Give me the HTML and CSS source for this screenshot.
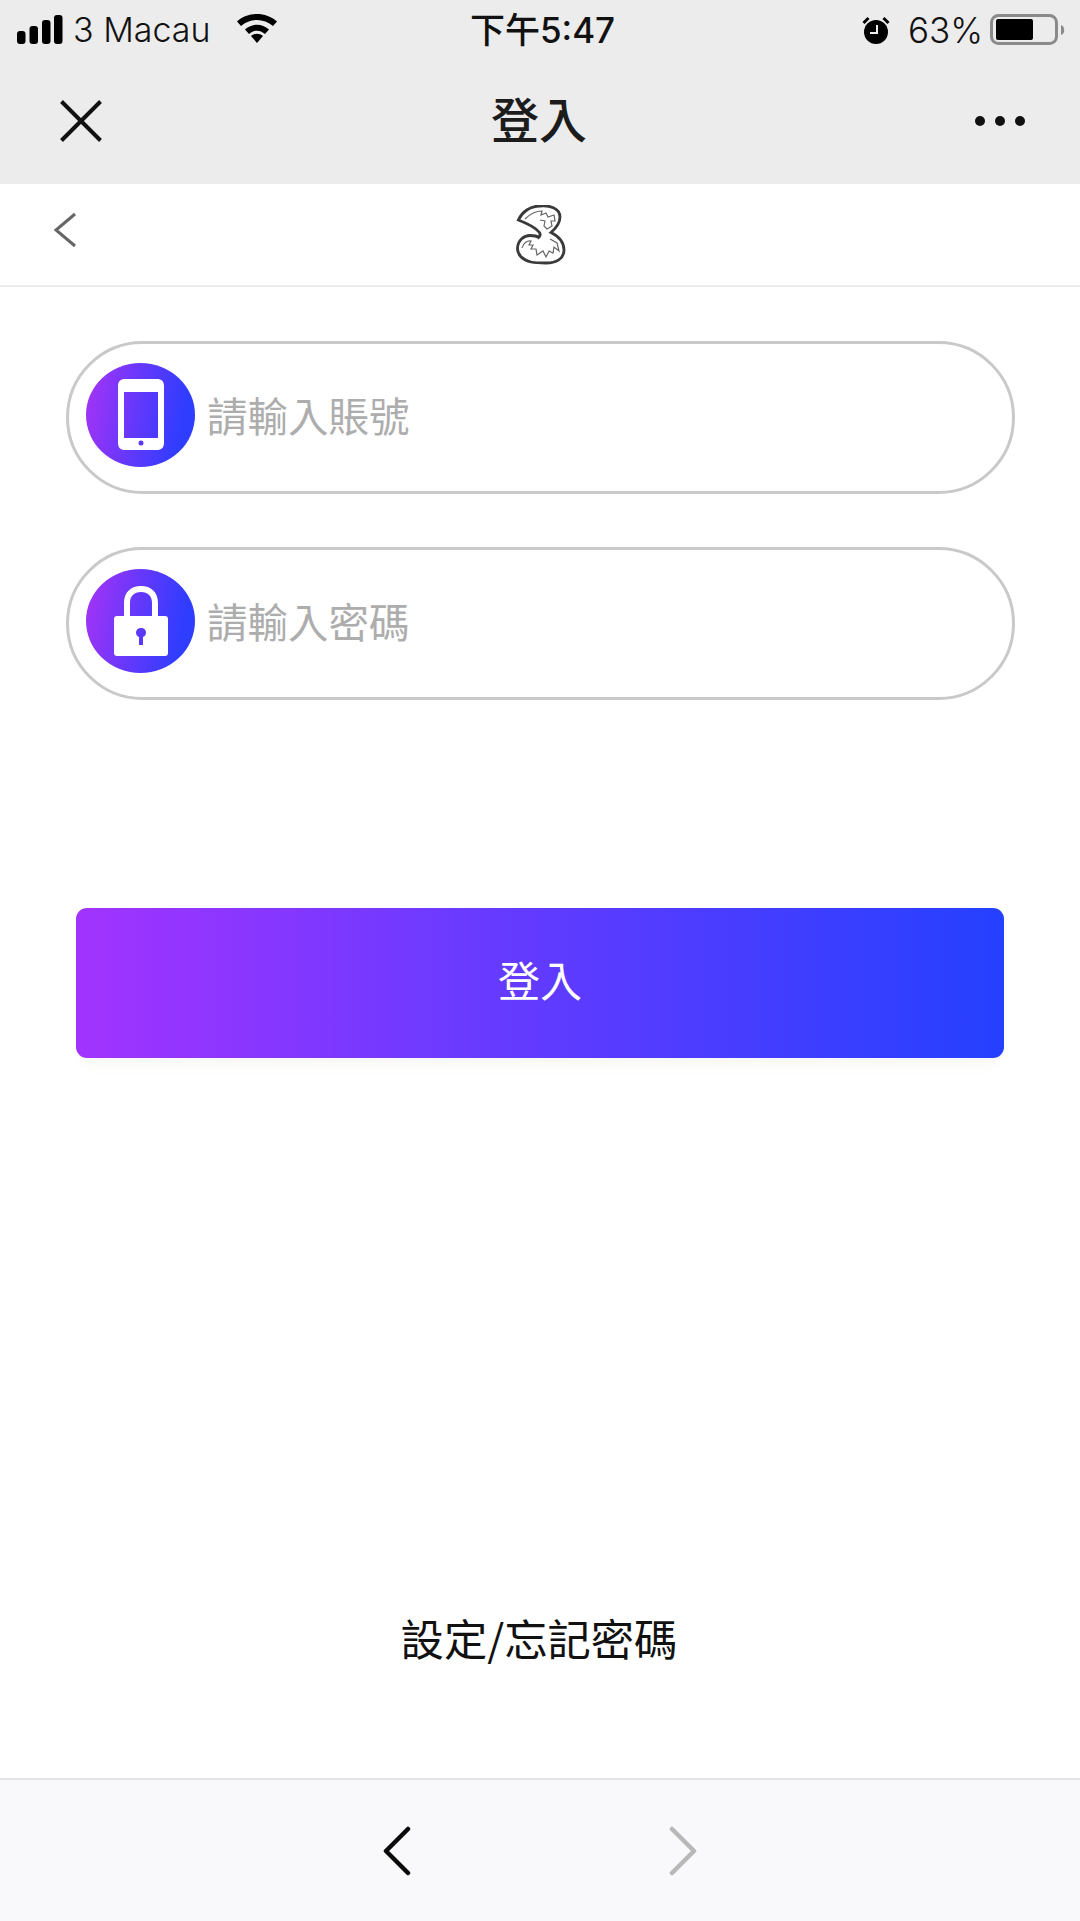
FILE: index.html
```html
<!DOCTYPE html>
<html lang="zh-Hant">
<head>
<meta charset="utf-8">
<title>登入</title>
<link rel="stylesheet" href="styles.css">
</head>
<body>
<div class="app">
  <header class="top">
    <div class="status">
      <div class="status-left">
        <svg class="signal" width="46" height="30" viewBox="0 0 46 30"><rect x="0" y="16" width="8.500" height="13" rx="3"/><rect x="12.500" y="11" width="8.500" height="18" rx="3"/><rect x="25" y="5" width="8.500" height="24" rx="3"/><rect x="37" y="0" width="8.500" height="29" rx="3"/></svg>
        <span class="carrier">3 Macau</span>
        <svg class="wifi" width="40" height="30" viewBox="0 0 40 30"><path d="M0 7.500C11-2.500 29-2.500 40 7.500L36 12C27 4 13 4 4 12Z"/><path d="M8 15.500C15 9 25 9 32 15.500L28 20C23 15.500 17 15.500 12 20Z"/><path d="M14 22C17.500 19 22.500 19 26 22L20 29Z"/></svg>
      </div>
      <div class="status-time">下午5:47</div>
      <div class="status-right">
        <svg class="alarm" width="28" height="28" viewBox="0 0 28 28"><circle cx="14" cy="16" r="12"/><path d="M1.500 7 6.500 2M26.500 7 21.500 2" class="alarm-bell"/><path d="M15 9v8H8" class="alarm-hand"/></svg>
        <span class="percent">63%</span>
        <svg class="battery" width="76" height="32" viewBox="0 0 76 32"><rect x="1.500" y="1.500" width="65" height="28" rx="7" class="battery-case"/><rect x="6" y="5" width="37" height="21" rx="2"/><path d="M71 11c4 1 4.500 9 0 10Z" class="battery-nub"/></svg>
      </div>
    </div>
    <div class="nav">
      <svg class="close" width="42" height="42" viewBox="0 0 42 42"><path d="M1.500 1.500 40.500 40.500M40.500 1.500 1.500 40.500"/></svg>
      <h1 class="nav-title">登入</h1>
      <div class="dots"><i></i><i></i><i></i></div>
    </div>
  </header>

  <div class="brand">
    <svg class="back" width="24" height="36" viewBox="0 0 24 36"><path d="M22 2 3 18 22 34"/></svg>
    <svg class="logo" width="50" height="60" viewBox="0 0 50 60">
      <path class="logo-outer" d="M2.300 15C6 7 14 1 24 1C33 0 44 3 44 12C44 19 39 24 35 27.500C42 31 48 37 48 45C48 54 40 58 30 58C24 58 20 58 15 57C7 55 1 50 1.500 43C2 35 8 30.500 14 30.500C18 30.500 21 31 22.500 32.500C24 31 25 29 23 27C19 22 10 18 2.300 15Z"/>
      <path class="logo-inner" d="M9 14C14 9 20 6 26 6L25 10 30 8 32 12 38 10 39 16 35 16 36 21 31 24 28 21 29 16 24 15M6 43C7 38 12 35 15 36L13 40 17 40 15 44 20 44 21 50 27 46 30 52 33 46 37 48 38 42 43 46 41 38 34 34"/>
    </svg>
  </div>

  <main class="content">
    <label class="field">
      <span class="badge">
        <svg width="48" height="72" viewBox="0 0 48 72"><path class="glyph" fill-rule="evenodd" d="M8 0H40C44.500 0 47 2.500 47 7V64C47 68.500 44.500 71 40 71H8C3.500 71 1 68.500 1 64V7C1 2.500 3.500 0 8 0ZM7 13V59H41V13ZM24 61.500A2.500 2.500 0 1 0 24 66.500A2.500 2.500 0 1 0 24 61.500Z"/></svg>
      </span>
      <span class="placeholder">請輸入賬號</span>
    </label>
    <label class="field field-second">
      <span class="badge">
        <svg width="56" height="72" viewBox="0 0 56 72"><path class="glyph" fill-rule="evenodd" d="M11 31V18C11 7 18 1 28 1C38 1 45 7 45 18V31H52C54 31 55 32 55 34V68C55 70 54 71 52 71H4C2 71 1 70 1 68V34C1 32 2 31 4 31ZM17 31H39V18C39 11 35 7 28 7C21 7 17 11 17 18ZM28 43C25 43 23 45 23 47.500C23 49.500 24 51 26 52V60H30V52C32 51 33 49.500 33 47.500C33 45 31 43 28 43Z"/></svg>
      </span>
      <span class="placeholder">請輸入密碼</span>
    </label>
    <button class="submit" type="button"><span class="submit-label">登入</span></button>
    <a class="forgot">設定/忘記密碼</a>
  </main>

  <footer class="toolbar">
    <svg class="arrow arrow-on" width="28" height="50" viewBox="0 0 28 50"><path d="M25 3 3 25 25 47"/></svg>
    <svg class="arrow arrow-off" width="28" height="50" viewBox="0 0 28 50"><path d="M3 3 25 25 3 47"/></svg>
  </footer>
</div>
</body>
</html>
```

FILE: styles.css
```css
* { box-sizing: border-box; }
html, body { margin: 0; padding: 0; background: #fff; }
body { font-family: "Noto Sans CJK TC", "Noto Sans", sans-serif; color: #111; }
.app { width: 1080px; height: 1921px; display: flex; flex-direction: column; overflow: hidden; }

.top { height: 184px; background: #ececec; flex: none; }
.status { height: 60px; display: grid; grid-template-columns: 1fr auto 1fr; align-items: center; padding: 0 14px 0 17px; }
.status-left { display: flex; align-items: center; }
.signal { fill: #000; margin-top: -1px; }
.carrier { font: 300 34px/1 Inter, sans-serif; margin-left: 10px; color: #111; }
.wifi { fill: #000; margin-left: 26px; margin-top: -2px; }
.status-time { font: 500 35px/1 Inter, "Noto Sans CJK TC", sans-serif; color: #111; margin-left: 2px; }
.status-right { display: flex; align-items: center; justify-content: flex-end; }
.alarm { fill: #000; }
.alarm-bell { fill: none; stroke: #000; stroke-width: 3; }
.alarm-hand { fill: none; stroke: #ececec; stroke-width: 2; }
.percent { font: 300 35px/1 Inter, sans-serif; margin: 0 7px 0 18px; color: #111; }
.battery { fill: #000; }
.battery-case { fill: none; stroke: #8a8a8a; stroke-width: 3; }
.battery-nub { fill: #8a8a8a; }

.nav { height: 124px; display: flex; align-items: center; justify-content: space-between; padding: 0 55px 3px 60px; position: relative; }
.close { fill: none; stroke: #111; stroke-width: 4; }
.nav-title { margin: 0 0 8px; font-size: 48px; font-weight: 500; line-height: 1; color: #1c1c1c; position: absolute; left: 0; right: 2px; text-align: center; pointer-events: none; }
.dots { display: flex; gap: 10px; }
.dots i { width: 10px; height: 10px; border-radius: 50%; background: #111; }

.brand { height: 103px; border-bottom: 2px solid #ececec; flex: none; display: flex; align-items: flex-start; padding: 28px 0 0 54px; position: relative; }
.back { fill: none; stroke: #666; stroke-width: 3; margin-left: -1px; }
.logo { position: absolute; left: 516px; top: 21px; }
.logo-outer { fill: #fff; stroke: #3a3a3a; stroke-width: 2.800; }
.logo-inner { fill: none; stroke: #666; stroke-width: 1.200; }

.content { flex: 1; display: flex; flex-direction: column; padding: 54px 65px 0 66px; }
.field { height: 153px; border: 3px solid #c9c9c9; border-radius: 77px; display: flex; align-items: center; padding: 0 0 5px 17px; }
.field-second { margin-top: 53px; }
.badge { width: 109px; height: 104px; border-radius: 50%; flex: none; background: linear-gradient(100deg, #a833f6 0%, #6538fb 45%, #2e3dff 85%); display: flex; align-items: center; justify-content: center; }
.glyph { fill: #fff; }
.placeholder { margin-left: 12px; font-size: 40.500px; line-height: 1; font-weight: 400; color: #adadad; }
.submit { margin: 208px 11px 0 10px; height: 150px; border: 0; border-radius: 11px; background: linear-gradient(90deg, #a233ff 0%, #6a3aff 42%, #2540ff 100%); box-shadow: 0 12px 10px -6px rgba(240, 240, 235, .5); padding: 0 0 9px; color: #fff; font: 400 42px/1 "Noto Sans CJK TC", sans-serif; }
.submit-label { display: block; }
.forgot { margin-top: 553px; text-align: center; font-size: 43.300px; line-height: 52px; color: #111; margin-right: 3px; }

.toolbar { height: 143px; flex: none; background: #f9f9fb; border-top: 2px solid #e3e3e6; display: flex; align-items: flex-start; padding: 46px 0 0 383px; gap: 258px; }
.arrow { fill: none; stroke-width: 4.500; stroke-linecap: round; stroke-linejoin: round; }
.arrow-on { stroke: #0a0a0a; }
.arrow-off { stroke: #b8b8b8; }
```
